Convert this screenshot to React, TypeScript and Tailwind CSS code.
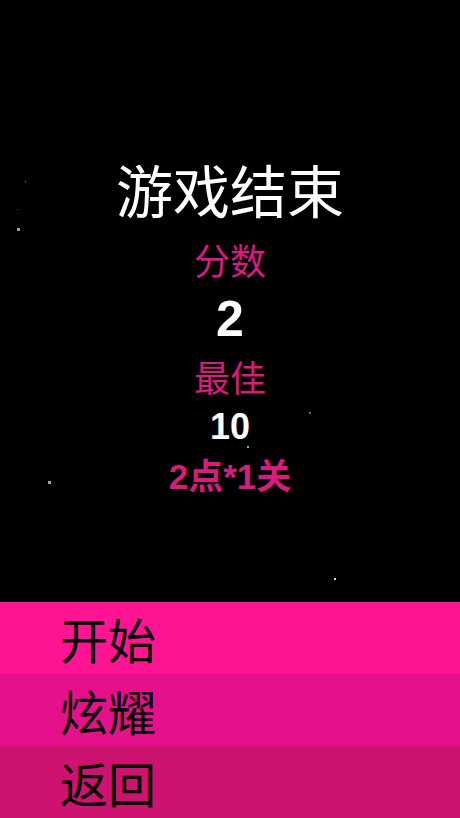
const font = { fontFamily: '"Noto Sans CJK SC", "Noto Sans", sans-serif' };
const numFont = { fontFamily: '"Liberation Sans", "Noto Sans CJK SC", sans-serif' };

const stars = [
  { x: 25, y: 181, s: 1, o: 'bg-gray-500' },
  { x: 17, y: 209, s: 1, o: 'bg-gray-600' },
  { x: 17, y: 228, s: 3, o: 'bg-gray-400' },
  { x: 309, y: 412, s: 2, o: 'bg-gray-500' },
  { x: 247, y: 446, s: 2, o: 'bg-gray-400' },
  { x: 48, y: 481, s: 3, o: 'bg-gray-400' },
  { x: 334, y: 578, s: 2, o: 'bg-gray-300' },
];

const buttons = [
  { label: '开始', bg: 'bg-[#ff1493]' },
  { label: '炫耀', bg: 'bg-[#e5118a]' },
  { label: '返回', bg: 'bg-[#cd136f]' },
];

export default function App() {
  return (
    <div className="flex h-[818px] w-[460px] flex-col bg-black" style={font}>
      <div className="relative flex h-[602px] flex-col items-center pt-[160px]">
        {stars.map((st, i) => (
          <span
            key={i}
            className={`absolute ${st.o}`}
            style={{ left: st.x, top: st.y, width: st.s, height: st.s }}
          />
        ))}
        <h1 className="text-[57px] leading-none text-white">游戏结束</h1>
        <p className="mt-[24px] text-[36px] leading-none text-[#d81b7d]">分数</p>
        <p className="mt-[17px] text-[50px] font-bold leading-none text-white" style={numFont}>
          2
        </p>
        <p className="mt-[14px] text-[36px] leading-none text-[#d81b7d]">最佳</p>
        <p className="mt-[15px] text-[36px] font-bold leading-none text-white" style={numFont}>
          10
        </p>
        <p className="mt-[14px] text-[35px] font-bold leading-none text-[#d81b7d]" style={numFont}>
          2点*1关
        </p>
      </div>
      <div className="flex flex-1 flex-col">
        {buttons.map((b) => (
          <button
            key={b.label}
            className={`flex h-[72px] items-center pl-[60px] text-left text-[48px] leading-none text-black ${b.bg}`}
          >
            {b.label}
          </button>
        ))}
      </div>
    </div>
  );
}
